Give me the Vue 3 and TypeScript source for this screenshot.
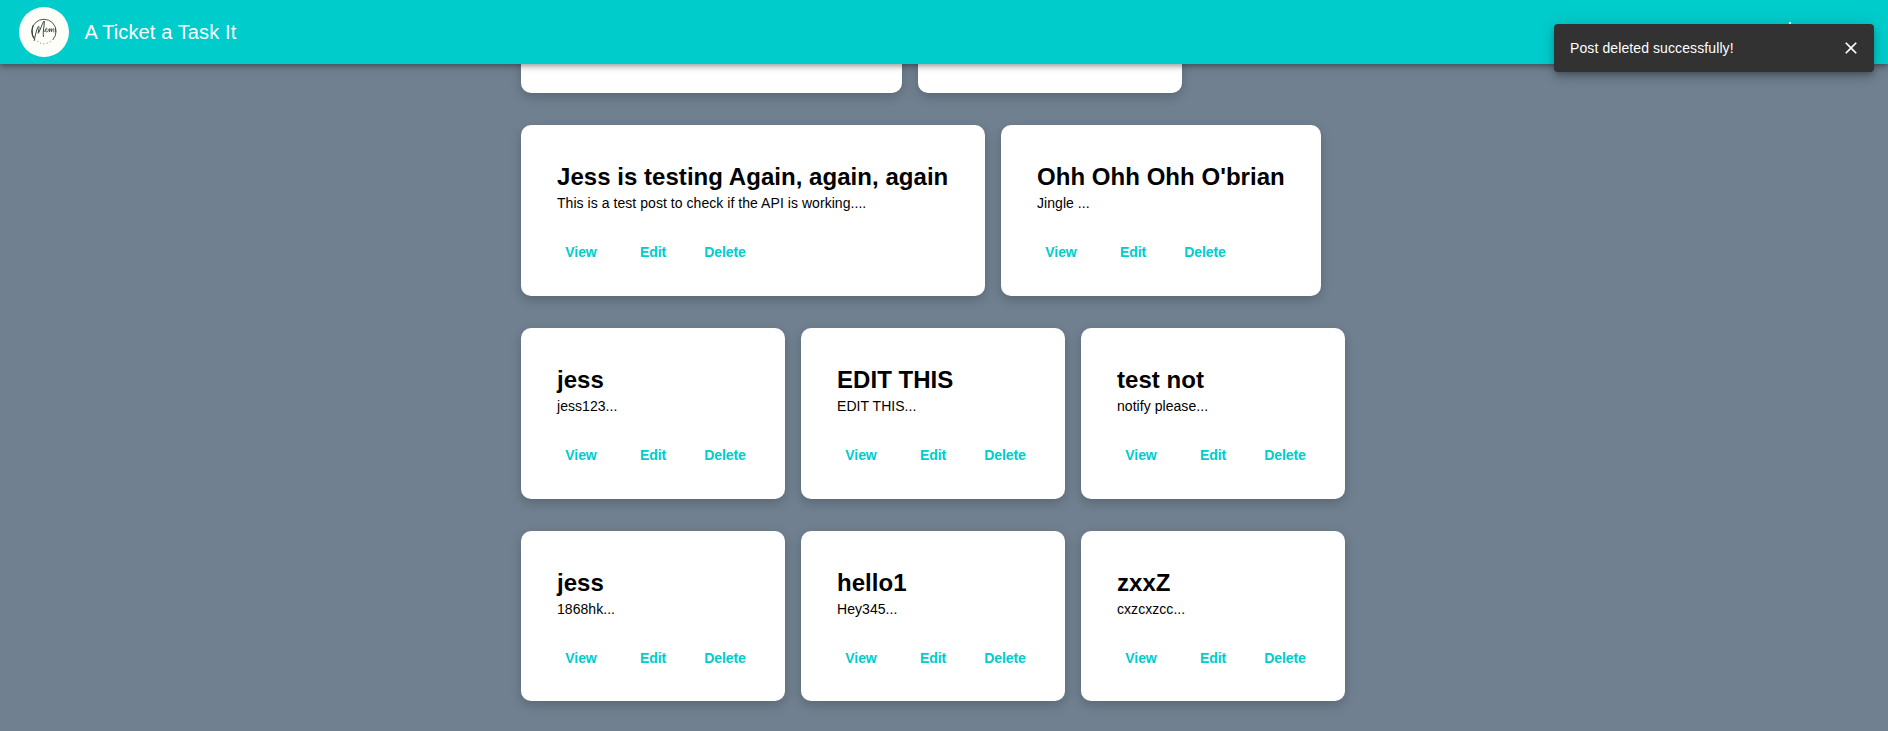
<script setup lang="ts">
interface Post {
  title: string
  body: string
  width: number
}

const rows: Post[][] = [
  [
    { title: '', body: '', width: 381 },
    { title: '', body: '', width: 264 },
  ],
  [
    { title: 'Jess is testing Again, again, again', body: 'This is a test post to check if the API is working....', width: 464 },
    { title: "Ohh Ohh Ohh O'brian", body: 'Jingle ...', width: 320 },
  ],
  [
    { title: 'jess', body: 'jess123...', width: 264 },
    { title: 'EDIT THIS', body: 'EDIT THIS...', width: 264 },
    { title: 'test not', body: 'notify please...', width: 264 },
  ],
  [
    { title: 'jess', body: '1868hk...', width: 264 },
    { title: 'hello1', body: 'Hey345...', width: 264 },
    { title: 'zxxZ', body: 'cxzcxzcc...', width: 264 },
  ],
]
</script>

<template>
  <div class="page">
    <header class="bar">
      <svg class="logo" viewBox="0 0 50 50">
        <circle cx="25" cy="25" r="25" fill="#fffffa" />
        <g fill="none" stroke="#34433f" stroke-linecap="round" stroke-linejoin="round">
          <path d="M15.5 32.2A12.2 12.2 0 1 1 34 32.6" stroke-width=".9" />
          <path d="M14.1 18.8C12.6 22 12.7 27.5 14.6 30.6" stroke-width="1.2" />
          <path d="M15.2 33.5C16.5 27 18.5 19.5 19.6 19.3C20.8 19.5 19 26 19.2 26.3C20.5 25 24 14.5 25.2 14C25.8 17 23.6 24 24.4 29.5" stroke-width="1" />
          <path d="M25.4 24.5C28.2 23.2 28.6 20.9 27.4 21.2C26 21.6 25.8 25 27.8 25C29 24.8 29.8 22 30.4 21.6V25C31 23 31.8 21.2 32.4 21.6V25C33.2 22.6 34.2 21 34.8 21.8V25M36.6 21.6V24.8" stroke-width=".8" />
          <path d="M18.8 34.2L19 34.5M21.4 36L21.7 36.2M24.7 36.8H25M28 36.2L28.3 36.1M31 34.9L31.3 34.7" stroke="#7d8784" stroke-width="1" />
        </g>
      </svg>
      <h1 class="brand">A Ticket a Task It</h1>
      <svg class="account" viewBox="0 0 20 20"><path d="M9 0H11V2L20 11 11 20H9L0 11 9 2z" fill="#fff" /></svg>
    </header>

    <main class="board">
      <section v-for="(row, r) in rows" :key="r" class="row">
        <article v-for="(post, i) in row" :key="i" class="card" :style="{ width: post.width + 'px' }">
          <div class="content">
            <h2 class="title">{{ post.title }}</h2>
            <p class="text">{{ post.body }}</p>
          </div>
          <div v-if="post.title" class="actions">
            <button class="btn">View</button>
            <button class="btn">Edit</button>
            <button class="btn">Delete</button>
          </div>
        </article>
      </section>
    </main>

    <div class="toast" role="alert">
      <span>Post deleted successfully!</span>
      <svg class="close" viewBox="0 0 24 24">
        <path fill="#fff" d="M19 6.41 17.59 5 12 10.59 6.41 5 5 6.41 10.59 12 5 17.59 6.41 19 12 13.41 17.59 19 19 17.59 13.41 12z" />
      </svg>
    </div>
  </div>
</template>

<style>
body {
  margin: 0;
  overflow: hidden;
}
</style>

<style scoped>
.page {
  position: relative;
  height: 731px;
  overflow: hidden;
  background: #708090;
  font-family: "Liberation Sans", Arial, sans-serif;
}
.bar {
  position: absolute;
  inset: 0 0 auto;
  z-index: 1;
  box-sizing: border-box;
  height: 64px;
  padding: 0 88px 0 19px;
  display: flex;
  align-items: center;
  background: #00cccc;
  color: #fff;
  box-shadow: 0 2px 4px -1px rgba(0, 0, 0, 0.2), 0 4px 5px rgba(0, 0, 0, 0.14), 0 1px 10px rgba(0, 0, 0, 0.12);
}
.logo {
  width: 50px;
  height: 50px;
  margin-right: 15.5px;
}
.brand {
  margin: 0;
  font-size: 20px;
  font-weight: 400;
  line-height: 32px;
  letter-spacing: 0.12px;
}
.account {
  width: 20px;
  height: 20px;
  margin-left: auto;
}
.board {
  box-sizing: border-box;
  height: 731px;
  padding: 0 0 29.6px 521px;
  display: flex;
  flex-direction: column;
  justify-content: flex-end;
  gap: 32px;
}
.row {
  display: flex;
  flex: none;
  gap: 16px;
}
.card {
  box-sizing: border-box;
  height: 170.8px;
  padding: 20px;
  border-radius: 10px;
  background: #fff;
  box-shadow: 0 4px 12px rgba(0, 0, 0, 0.2);
}
.content {
  padding: 16px;
}
.title {
  margin: 0;
  font-size: 24px;
  line-height: 32px;
  letter-spacing: 0.04px;
  white-space: nowrap;
  color: #000;
}
.text {
  margin: 0;
  font-size: 14px;
  line-height: 20px;
  letter-spacing: 0.05px;
  white-space: nowrap;
  color: #000;
}
.actions {
  display: flex;
  gap: 8px;
  padding: 8px;
}
.btn {
  width: 64px;
  padding: 4px 5px;
  border: 0;
  background: none;
  color: #00cccc;
  font: bold 14px/22.75px "Liberation Sans", Arial, sans-serif;
  letter-spacing: -0.1px;
}
.toast {
  position: absolute;
  top: 24px;
  right: 14px;
  z-index: 2;
  box-sizing: border-box;
  width: 320px;
  height: 48px;
  padding: 0 13px 0 16px;
  display: flex;
  align-items: center;
  justify-content: space-between;
  border-radius: 4px;
  background: #323232;
  color: #fff;
  font-size: 14px;
  line-height: 20px;
  letter-spacing: 0.1px;
  box-shadow: 0 3px 5px -1px rgba(0, 0, 0, 0.2), 0 6px 10px rgba(0, 0, 0, 0.14), 0 1px 18px rgba(0, 0, 0, 0.12);
}
.close {
  width: 20px;
  height: 20px;
}
</style>
